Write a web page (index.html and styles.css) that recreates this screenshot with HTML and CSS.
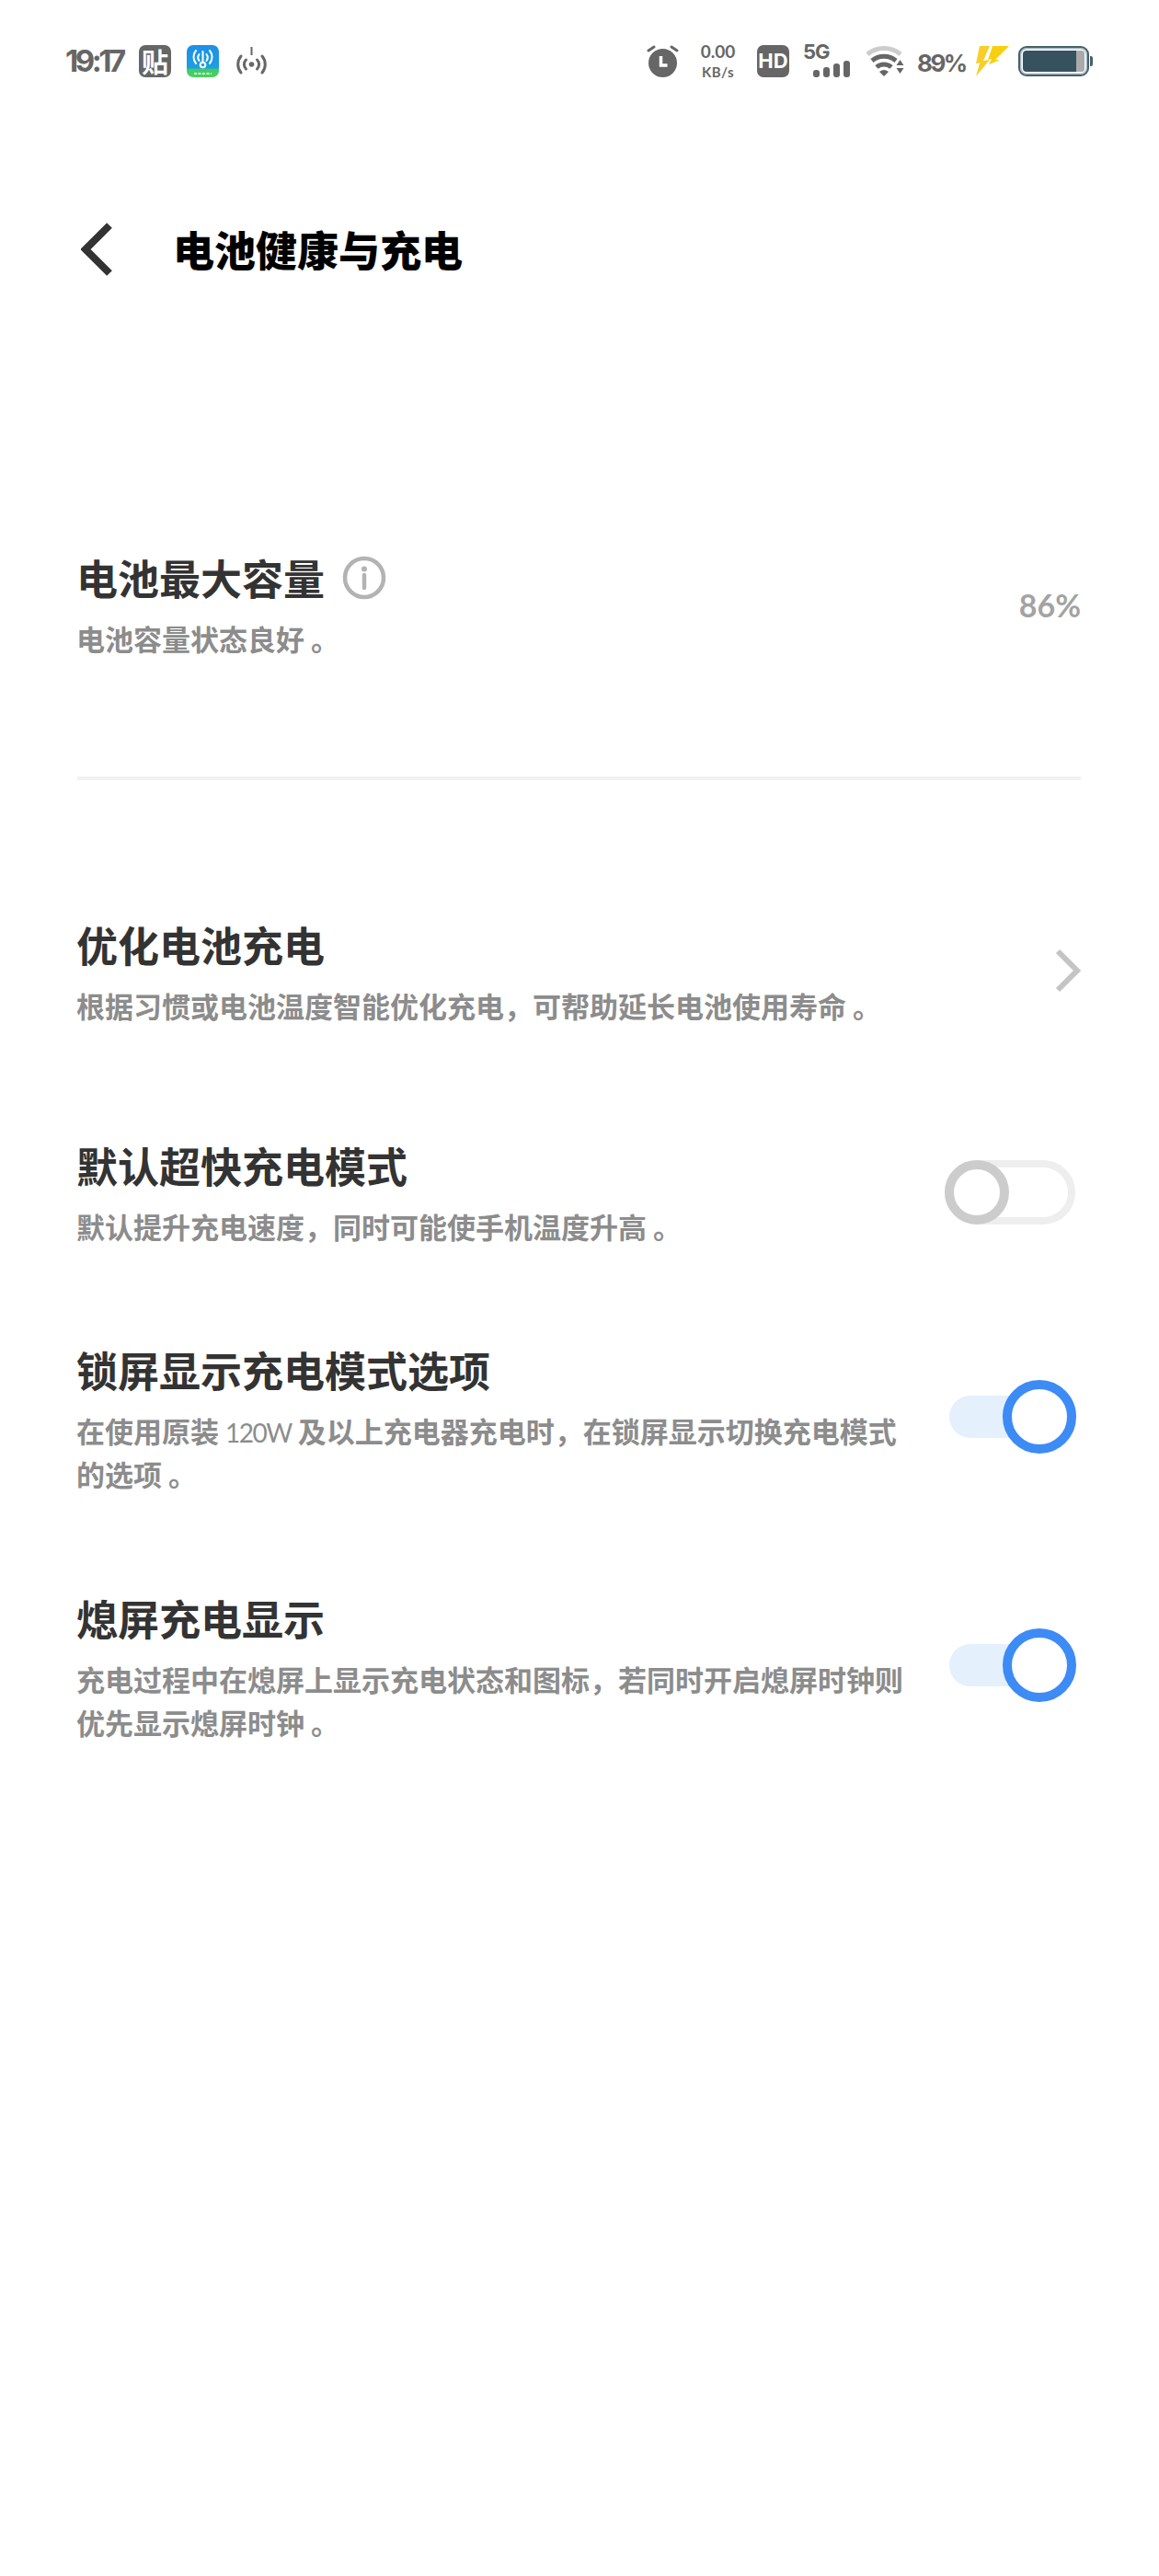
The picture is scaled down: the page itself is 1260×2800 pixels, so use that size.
FILE: index.html
```html
<!DOCTYPE html>
<html lang="zh-CN">
<head>
  <meta charset="UTF-8" />
  <title>电池健康与充电</title>
  <link rel="stylesheet" href="styles.css">
</head>
<body>
  <!-- 状态栏 -->
  <div class="status">
    <div class="status-left">
      <span class="time">19:17</span>
      <span class="tile tile-tie">贴</span>
      <svg class="ic-app" width="35" height="35" viewBox="0 0 35 35">
        <defs>
          <linearGradient id="appbg" x1="0" y1="0" x2="0" y2="1">
            <stop offset="0" stop-color="#1f8fe8"/>
            <stop offset=".7" stop-color="#1c9fe0"/>
            <stop offset=".76" stop-color="#3ecb6e"/>
            <stop offset="1" stop-color="#4fd05c"/>
          </linearGradient>
        </defs>
        <rect width="35" height="35" rx="7" fill="url(#appbg)"/>
        <g fill="none" stroke="#fff" stroke-width="2" stroke-linecap="round">
          <path d="M10 6a11 11 0 0 0 0 14M25 6a11 11 0 0 1 0 14"/>
          <path d="M13.500 10a6 6 0 0 0 0 7M21.500 10a6 6 0 0 1 0 7"/>
          <path d="M17.500 7v12"/>
          <circle cx="17.500" cy="21.500" r="2.800"/>
        </g>
        <path d="M8 31h19" stroke="#d8f5d8" stroke-width="2" stroke-dasharray="3 1.500"/>
      </svg>
      <svg class="ic-hotspot" width="35" height="32" viewBox="0 0 35 32">
        <g fill="none" stroke="#666" stroke-width="3" stroke-linecap="round">
          <path d="M6 11a14 14 0 0 0 0 18M29 11a14 14 0 0 1 0 18"/>
          <path d="M11.500 15a7 7 0 0 0 0 10M23.500 15a7 7 0 0 1 0 10"/>
        </g>
        <circle cx="17.500" cy="20" r="2.800" fill="#666"/>
        <path d="M17.500 1v9" stroke="#666" stroke-width="2"/>
      </svg>
    </div>
    <div class="status-right">
      <svg class="ic-alarm" width="35" height="35" viewBox="0 0 35 35">
        <circle cx="17.500" cy="19.500" r="15.500" fill="#666"/>
        <path d="M2 6l6-4M33 6l-6-4" stroke="#666" stroke-width="3" stroke-linecap="round"/>
        <path d="M15.500 12v10h7" fill="none" stroke="#fff" stroke-width="3.500"/>
      </svg>
      <div class="speed">
        <span class="speed-num">0.00</span>
        <span class="speed-unit">KB/s</span>
      </div>
      <span class="tile tile-hd">HD</span>
      <div class="net">
        <span class="net-label">5G</span>
        <div class="bars"><i class="b1"></i><i class="b2"></i><i class="b3"></i><i class="b4"></i></div>
      </div>
      <svg class="ic-wifi" width="45" height="36" viewBox="0 0 45 36">
        <g fill="none" stroke-width="5">
          <path d="M3 11a28 28 0 0 1 36 0" stroke="#ccc"/>
          <path d="M8 18a20 20 0 0 1 26 0" stroke="#666"/>
          <path d="M13 25a12 12 0 0 1 16 0" stroke="#666"/>
        </g>
        <path d="M16 30a8 8 0 0 1 10 0l-5 5z" fill="#666"/>
        <path d="M38.500 17l4 6h-8zM34.500 26h8l-4 6z" fill="#666"/>
      </svg>
      <span class="pct">89%</span>
      <svg class="ic-bolt" width="38" height="34" viewBox="0 0 38 32" preserveAspectRatio="none">
        <path d="M6 1h11L10 16l7-1-15 17 4-14-4 1z" fill="#f8cf2a"/>
        <path d="M20 1h18L23 15l5 0-12 5 3-6-4 1z" fill="#f8cf10"/>
      </svg>
      <div class="battery">
        <div class="battery-body"><div class="battery-fill"></div><div class="battery-rest"></div></div>
        <div class="battery-nub"></div>
      </div>
    </div>
  </div>

  <!-- 标题 -->
  <div class="header">
    <svg class="back" width="36" height="58" viewBox="0 0 36 58">
      <path d="M31 3L5 29l26 26" fill="none" stroke="#333" stroke-width="8"/>
    </svg>
    <h1>电池健康与充电</h1>
  </div>

  <!-- 电池容量 -->
  <div class="row capacity">
    <div class="text">
      <div class="name">电池最大容量
        <svg class="info" width="48" height="48" viewBox="0 0 48 48">
          <circle cx="24" cy="24" r="21" fill="none" stroke="#b3b3b3" stroke-width="4.500"/>
          <circle cx="24" cy="14.500" r="3" fill="#b3b3b3"/>
          <path d="M24 21v14" stroke="#b3b3b3" stroke-width="4.500" stroke-linecap="round"/>
        </svg>
      </div>
      <div class="desc">电池容量状态良好 。</div>
    </div>
    <span class="value">86%</span>
  </div>

  <div class="divider"></div>

  <div class="list">
    <div class="row row-link">
      <div class="text">
        <div class="name">优化电池充电</div>
        <div class="desc">根据习惯或电池温度智能优化充电，可帮助延长电池使用寿命 。</div>
      </div>
      <svg class="chevron" width="30" height="50" viewBox="0 0 30 50">
        <path d="M4 4l21 21L4 46" fill="none" stroke="#c4c4c4" stroke-width="6"/>
      </svg>
    </div>

    <div class="row">
      <div class="text">
        <div class="name">默认超快充电模式</div>
        <div class="desc">默认提升充电速度，同时可能使手机温度升高 。</div>
      </div>
      <div class="toggle off"><span class="knob"></span></div>
    </div>

    <div class="row">
      <div class="text">
        <div class="name">锁屏显示充电模式选项</div>
        <div class="desc">在使用原装 <span class="latin">120W</span> 及以上充电器充电时，在锁屏显示切换充电模式的选项 。</div>
      </div>
      <div class="toggle on"><span class="knob"></span></div>
    </div>

    <div class="row">
      <div class="text">
        <div class="name">熄屏充电显示</div>
        <div class="desc">充电过程中在熄屏上显示充电状态和图标，若同时开启熄屏时钟则优先显示熄屏时钟 。</div>
      </div>
      <div class="toggle on"><span class="knob"></span></div>
    </div>
  </div>
</body>
</html>
```

FILE: styles.css
```css
body{margin:0;background:#fff;color:#333;font-family:"Noto Sans CJK SC","Noto Sans",sans-serif}

/* status bar */
.status{height:132px;padding:0 72px 0 71px;display:flex;justify-content:space-between;align-items:center;color:#666}
.status-left,.status-right{display:flex;align-items:center}
.time{font:700 33px/1 Inter,sans-serif;letter-spacing:-3.500px;width:80px}
.tile{width:35px;height:35px;border-radius:7px;background:#666;color:#fff;display:flex;align-items:center;justify-content:center;font-weight:700}
.tile-tie{font-size:29px;line-height:1}
.tile-hd{font:700 22px/1 Inter,sans-serif;margin-right:15px}
.ic-app{margin-left:17px}
.ic-hotspot{margin-left:18px}
.speed{width:35px;margin:0 25px;display:flex;flex-direction:column;align-items:center;font-family:Lato,sans-serif;font-weight:700}
.speed-num{font-size:19px;line-height:24px}
.speed-unit{font-size:15px;line-height:20px;letter-spacing:.5px}
.net{width:51px;height:36px;position:relative}
.net-label{position:absolute;left:0;top:-4px;font:700 22px/24px Inter,sans-serif;letter-spacing:-1px}
.bars{position:absolute;right:0;bottom:0;display:flex;align-items:flex-end;gap:4px}
.bars i{width:7px;background:#666;border-radius:3px;display:block}
.b1{height:8px}
.b2{height:11px}
.b3{height:15px}
.b4{height:18px}
.ic-wifi{margin-left:16px}
.pct{font:700 26px/1 Inter,sans-serif;letter-spacing:-2.500px;margin:6px 0 0 12px;width:50px}
.ic-bolt{margin-left:12px}
.battery{margin-left:10px;display:flex;align-items:center}
.battery-body{width:77px;height:33px;box-sizing:border-box;border:2px solid #46606c;border-radius:9px;box-shadow:inset 0 0 0 1.500px #a9bec8;padding:3px;display:flex}
.battery-fill{flex:1;background:#37525f;border-radius:4px 0 0 4px}
.battery-rest{width:9px;background:#aaa;border-radius:0 3px 3px 0}
.battery-nub{width:3px;height:11px;background:#46606c;border-radius:0 2px 2px 0;margin-left:1px}

/* header */
.header{height:278px;padding:0 0 2px 88px;display:flex;align-items:center}
.back{flex:none}
h1{margin:0 0 0 64px;font-size:45px;font-weight:900;color:#000;line-height:60px}

/* rows */
.row{display:flex;justify-content:space-between;align-items:center;padding:0 85px 0 83px}
.text{width:905px}
.name{font-size:45px;font-weight:700;line-height:60px;display:flex;align-items:center;color:#333}
.desc{font-size:31px;font-weight:700;line-height:47px;color:#8c8c8c;margin-top:12px}
.latin{font:400 28px/1 Lato,sans-serif;letter-spacing:-1.500px}
.capacity{margin-top:186px}
.info{margin-left:19px}
.value{font:700 34px/1 Lato,sans-serif;color:#a3a3a3}
.divider{height:4px;margin:127px 85px 0 84px;background:#f2f2f2}
.list{margin-top:149px;display:flex;flex-direction:column;gap:103.500px}
.row-link{margin-bottom:17px}
.chevron{margin:0 -1px 3px 0;flex:none}

/* toggles */
.toggle{position:relative;flex:none;box-sizing:border-box}
.toggle.off{width:142px;height:70px;margin:0 6px 1px 0;border:8px solid #eee;border-radius:35px}
.toggle.on{width:128px;height:46px;margin:0 15px 4px 0;background:#e4f0fc;border-radius:23px}
.knob{position:absolute;box-sizing:border-box;background:#fff;border-radius:50%}
.off .knob{left:-8px;top:-8px;width:70px;height:70px;border:10px solid #ccc}
.on .knob{right:-10px;top:-17px;width:80px;height:80px;border:10px solid #3d8bf5}
```
